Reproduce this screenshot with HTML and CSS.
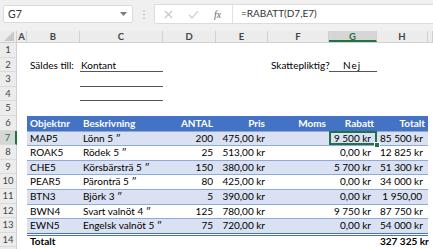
FILE: index.html
```html
<!DOCTYPE html>
<html lang="sv">
<head>
    <meta charset="UTF-8">
    <meta name="viewport" content="width=device-width, initial-scale=1.0">
    <title>Faktura</title>
    <link rel="stylesheet" href="styles.css">
</head>
<body>
    <div class="toolbar">
        <div class="namebox">
            <span>G7</span>
            <svg class="caret" width="7" height="4" viewBox="0 0 7 4"><path d="M0 0h7L3.5 4z" fill="#7a7a7a"/></svg>
        </div>
        <div class="grip">
            <svg width="2" height="9" viewBox="0 0 2 9"><circle cx="1" cy="1" r="0.8" fill="#b5b5b5"/><circle cx="1" cy="4.5" r="0.8" fill="#b5b5b5"/><circle cx="1" cy="8" r="0.8" fill="#b5b5b5"/></svg>
        </div>
        <div class="formula">
            <div class="fbtns">
                <svg width="9" height="9" viewBox="0 0 9 9"><path d="M1 1l7 7M8 1l-7 7" stroke="#c4c4c4" stroke-width="1.1"/></svg>
                <svg width="11" height="9" viewBox="0 0 11 9"><path d="M1 5l3 3 6-7" stroke="#c4c4c4" stroke-width="1.1" fill="none"/></svg>
                <span class="fx">fx</span>
            </div>
            <div class="ftext">=RABATT(D7,E7)</div>
        </div>
    </div>

    <div class="sheet">
        <div class="colhead">
            <div class="corner"><svg width="10" height="10" viewBox="0 0 10 10"><path d="M10 0v10H0z" fill="#c8c8c8"/></svg></div>
            <div class="ch a">A</div>
            <div class="ch b">B</div>
            <div class="ch c">C</div>
            <div class="ch d">D</div>
            <div class="ch e">E</div>
            <div class="ch f">F</div>
            <div class="ch g active">G</div>
            <div class="ch h">H</div>
            <div class="ch rest"></div>
        </div>

        <div class="row"><div class="rh">1</div></div>
        <div class="row">
            <div class="rh">2</div>
            <div class="cell a"></div>
            <div class="cell b">Säldes till:</div>
            <div class="cell c line">Kontant</div>
            <div class="cell d"></div>
            <div class="cell e"></div>
            <div class="cell f">Skattepliktig?</div>
            <div class="cell g line center spaced">Nej</div>
        </div>
        <div class="row">
            <div class="rh">3</div>
            <div class="cell a"></div>
            <div class="cell b"></div>
            <div class="cell c line"></div>
        </div>
        <div class="row">
            <div class="rh">4</div>
            <div class="cell a"></div>
            <div class="cell b"></div>
            <div class="cell c line"></div>
        </div>
        <div class="row"><div class="rh">5</div></div>

        <div class="row">
            <div class="rh">6</div>
            <div class="cell a"></div>
            <div class="band head">
                <div class="cell b">Objektnr</div>
                <div class="cell c">Beskrivning</div>
                <div class="cell d num">ANTAL</div>
                <div class="cell e num">Pris</div>
                <div class="cell f num">Moms</div>
                <div class="cell g num">Rabatt</div>
                <div class="cell h num">Totalt</div>
            </div>
        </div>
        <div class="row">
            <div class="rh active">7</div>
            <div class="cell a"></div>
            <div class="band odd">
                <div class="cell b">MAP5</div>
                <div class="cell c">Lönn 5 ″</div>
                <div class="cell d num">200</div>
                <div class="cell e num">475,00 kr</div>
                <div class="cell f num"></div>
                <div class="cell g num money selected">9 500 kr<span class="handle"></span></div>
                <div class="cell h num money">85 500 kr</div>
            </div>
        </div>
        <div class="row">
            <div class="rh">8</div>
            <div class="cell a"></div>
            <div class="band">
                <div class="cell b">ROAK5</div>
                <div class="cell c">Rödek 5 ″</div>
                <div class="cell d num">25</div>
                <div class="cell e num">513,00 kr</div>
                <div class="cell f num"></div>
                <div class="cell g num money">0,00 kr</div>
                <div class="cell h num money">12 825 kr</div>
            </div>
        </div>
        <div class="row">
            <div class="rh">9</div>
            <div class="cell a"></div>
            <div class="band odd">
                <div class="cell b">CHE5</div>
                <div class="cell c">Körsbärsträ 5 ″</div>
                <div class="cell d num">150</div>
                <div class="cell e num">380,00 kr</div>
                <div class="cell f num"></div>
                <div class="cell g num money">5 700 kr</div>
                <div class="cell h num money">51 300 kr</div>
            </div>
        </div>
        <div class="row">
            <div class="rh">10</div>
            <div class="cell a"></div>
            <div class="band">
                <div class="cell b">PEAR5</div>
                <div class="cell c">Päronträ 5 ″</div>
                <div class="cell d num">80</div>
                <div class="cell e num">425,00 kr</div>
                <div class="cell f num"></div>
                <div class="cell g num money">0,00 kr</div>
                <div class="cell h num money">34 000 kr</div>
            </div>
        </div>
        <div class="row">
            <div class="rh">11</div>
            <div class="cell a"></div>
            <div class="band odd">
                <div class="cell b">BTN3</div>
                <div class="cell c">Björk 3 ″</div>
                <div class="cell d num">5</div>
                <div class="cell e num">390,00 kr</div>
                <div class="cell f num"></div>
                <div class="cell g num money">0,00 kr</div>
                <div class="cell h num money">1 950,00</div>
            </div>
        </div>
        <div class="row">
            <div class="rh">12</div>
            <div class="cell a"></div>
            <div class="band">
                <div class="cell b">BWN4</div>
                <div class="cell c">Svart valnöt 4 ″</div>
                <div class="cell d num">125</div>
                <div class="cell e num">780,00 kr</div>
                <div class="cell f num"></div>
                <div class="cell g num money">9 750 kr</div>
                <div class="cell h num money">87 750 kr</div>
            </div>
        </div>
        <div class="row">
            <div class="rh">13</div>
            <div class="cell a"></div>
            <div class="band odd">
                <div class="cell b">EWN5</div>
                <div class="cell c">Engelsk valnöt 5 ″</div>
                <div class="cell d num">75</div>
                <div class="cell e num">720,00 kr</div>
                <div class="cell f num"></div>
                <div class="cell g num money">0,00 kr</div>
                <div class="cell h num money">54 000 kr</div>
            </div>
        </div>
        <div class="row">
            <div class="rh">14</div>
            <div class="cell a"></div>
            <div class="band total">
                <div class="cell b">Totalt</div>
                <div class="cell c"></div>
                <div class="cell d"></div>
                <div class="cell e"></div>
                <div class="cell f"></div>
                <div class="cell g"></div>
                <div class="cell h num money">327 325 kr</div>
            </div>
        </div>
        <div class="row"><div class="rh"></div></div>
    </div>
</body>
</html>
```

FILE: styles.css
```css
body {
    margin: 0;
    font-family: Lato, "Open Sans", sans-serif;
    font-size: 10px;
    color: #000000;
    background-color: #ffffff;
    overflow: hidden;
}

/* Formula toolbar */
.toolbar {
    display: flex;
    align-items: center;
    height: 31px;
    padding: 0 0 3px 3px;
    box-sizing: border-box;
    background-color: #f0f0f0;
}

.namebox {
    display: flex;
    justify-content: space-between;
    align-items: center;
    width: 130px;
    height: 18px;
    padding: 0 5px 0 4px;
    box-sizing: border-box;
    background-color: #ffffff;
    border: 1px solid #dcdcdc;
    border-radius: 2px;
    color: #333333;
    font-size: 10.5px;
}

.grip {
    display: flex;
    justify-content: center;
    width: 21px;
}

.formula {
    display: flex;
    flex: 1;
    height: 18px;
    background-color: #ffffff;
    border: 1px solid #dcdcdc;
    border-right: none;
    border-radius: 2px 0 0 2px;
}

.fbtns {
    display: flex;
    align-items: center;
    gap: 15px;
    width: 78px;
    padding-left: 9px;
    box-sizing: border-box;
    border-right: 1px solid #e2e2e2;
}

.fx {
    font-family: "Liberation Serif", serif;
    font-style: italic;
    font-size: 10px;
    color: #666666;
}

.ftext {
    padding-left: 8px;
    line-height: 17px;
    color: #333333;
    font-size: 10px;
}

/* Sheet grid */
.colhead {
    display: flex;
    height: 12px;
    background-color: #ececec;
    border-bottom: 1px solid #d0d0d0;
    box-sizing: border-box;
    font-size: 9.5px;
    font-weight: bold;
    color: #444444;
}

.corner {
    display: flex;
    align-items: flex-end;
    justify-content: flex-end;
    width: 17px;
    padding: 0 2px 1px 0;
    box-sizing: border-box;
    border-right: 1px solid #d0d0d0;
}

.ch {
    flex: none;
    text-align: center;
    line-height: 11px;
    border-right: 1px solid #d0d0d0;
    box-sizing: border-box;
}

.ch.active {
    background-color: #d6d6d6;
    color: #217346;
    border-bottom: 2px solid #217346;
}

.a { width: 10px; }
.b { width: 53px; }
.c { width: 83px; }
.d { width: 53px; }
.e { width: 52px; }
.f { width: 61px; }
.g { width: 48px; }
.h { width: 51px; }
.rest { width: 5px; }

.row {
    display: flex;
    height: 14.6px;
}

.rh {
    flex: none;
    width: 17px;
    background-color: #ececec;
    border-right: 1px solid #d0d0d0;
    border-bottom: 1px solid #dadada;
    box-sizing: border-box;
    text-align: center;
    font-size: 9.5px;
    line-height: 14px;
    color: #444444;
}

.rh.active {
    background-color: #d6d6d6;
    color: #217346;
    border-right: 2px solid #217346;
}

.cell {
    flex: none;
    position: relative;
    padding: 0 3px;
    box-sizing: border-box;
    line-height: 14px;
    white-space: nowrap;
}

.num {
    text-align: right;
}

.center {
    text-align: center;
}

.spaced {
    letter-spacing: 1px;
}

.line {
    border-bottom: 1px solid #555555;
    padding-left: 1px;
}

/* Table */
.band {
    display: flex;
    box-sizing: border-box;
    border-top: 1px solid #8ea9db;
}

.band .cell {
    line-height: 13px;
}

.band.head {
    background-color: #4472c4;
    color: #ffffff;
    font-weight: bold;
    border-top: none;
}

.band.head .cell {
    line-height: 14px;
}

.band.odd {
    background-color: #d9e1f2;
}

.band.total {
    border-top: 3px double #4472c4;
    font-weight: bold;
}

.band.total .cell {
    line-height: 11px;
}

.money {
    padding-right: 6px;
}

/* active cell outline */
.selected::after {
    content: "";
    position: absolute;
    top: -1px;
    left: 0;
    right: 0;
    bottom: 0;
    border: 2px solid #217346;
}

.handle {
    position: absolute;
    right: -3px;
    bottom: -3px;
    z-index: 1;
    width: 4px;
    height: 4px;
    background-color: #217346;
    border: 1px solid #ffffff;
}
```
